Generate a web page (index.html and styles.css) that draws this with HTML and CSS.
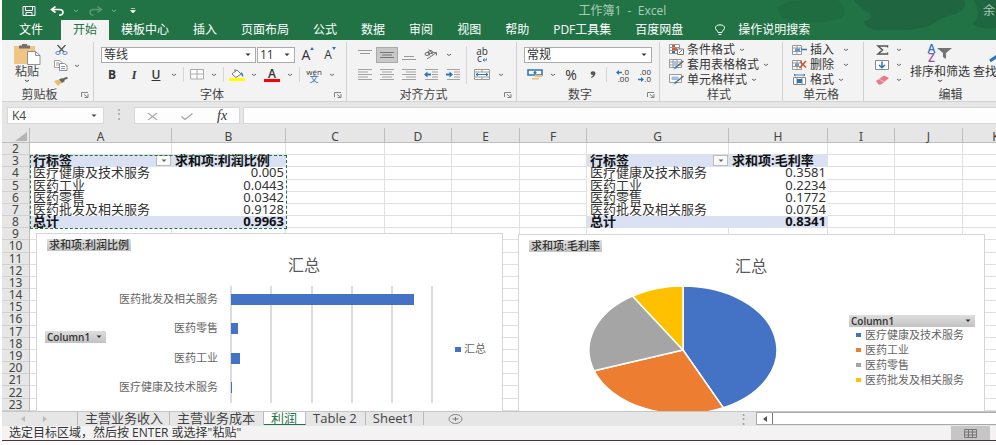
FILE: index.html
```html
<!DOCTYPE html>
<html lang="zh-CN">
<head>
  <meta charset="UTF-8">
  <title>工作簿1 - Excel</title>
  <link rel="stylesheet" href="styles.css">
</head>
<body>

  <svg class="defs" aria-hidden="true">
    <symbol id="chev" viewBox="0 0 6 4"><path d="M1 1l2 1.5L5 1" fill="none" stroke="currentColor"/></symbol>
    <symbol id="tri" viewBox="0 0 6 4"><path d="M0.5 0.5h5L3 3z" fill="currentColor"/></symbol>
    <symbol id="launch" viewBox="0 0 8 6"><path d="M0.5 5V0.5H7M3 2.5l3.500 2.500M7 2v3.500H3.500" fill="none" stroke="#777" stroke-width="0.9"/></symbol>
  </svg>

  <header class="top">
    <svg class="clouds" viewBox="0 0 240 40" preserveAspectRatio="none" aria-hidden="true">
      <path d="M22 8q6-8 30-8h30q10 8 5 17-18 8-40 4-26 0-25-13z" fill="#1f6c41"/>
      <path d="M98 0h110q4 8-8 14-14 3-22 9-14 9-50 7-16 2-20-8 12-5 4-10-10-6-14-12z" fill="#1e6540"/>
      <path d="M218 0h22v28q-12 2-24-4 10-8 2-24z" fill="#1e6540"/>
    </svg>
    <div class="titlebar">
      <div class="quick">
        <button class="q" aria-label="保存"><svg width="14" height="10" viewBox="0 0 14 10"><path d="M1 0.500h12v9H1zM3.500 0.500v4h7v-4M4 9.500v-3h6v3" fill="none" stroke="#fff"/></svg></button>
        <button class="q" aria-label="撤消"><svg width="15" height="10" viewBox="0 0 15 10"><path d="M2 3.500h7.500q3.500 0 3.500 2.800T9 9.200M5.500 0.500L1.500 3.500l4 3" fill="none" stroke="#fff" stroke-width="1.600"/></svg></button>
        <svg class="qc" width="6" height="4"><use href="#chev"/></svg>
        <button class="q" aria-label="恢复"><svg width="15" height="10" viewBox="0 0 15 10"><path d="M13 3.500H5.500Q2 3.500 2 6.300t3.500 2.900M9.500 0.500l4 3-4 3" fill="none" stroke="#5a9a76" stroke-width="1.400"/></svg></button>
        <svg class="qc" width="6" height="4"><use href="#chev"/></svg>
        <button class="q" aria-label="自定义"><svg width="6" height="6" viewBox="0 0 6 6"><path d="M1 0.500h4M0.500 2.500h5L3 5z" fill="#fff" stroke="#fff" stroke-width="0.600"/></svg></button>
      </div>
      <div class="title">工作簿1&nbsp; -&nbsp; Excel</div>
      <div class="user">余</div>
    </div>
    <nav class="tabs">
      <a href="#" class="file">文件</a>
      <a href="#" class="active">开始</a>
      <a href="#">模板中心</a>
      <a href="#">插入</a>
      <a href="#">页面布局</a>
      <a href="#">公式</a>
      <a href="#">数据</a>
      <a href="#">审阅</a>
      <a href="#">视图</a>
      <a href="#">帮助</a>
      <a href="#">PDF工具集</a>
      <a href="#">百度网盘</a>
      <a href="#" class="tell">
        <svg width="12" height="12" viewBox="0 0 12 12"><path d="M4 8.500Q3.800 7.300 2.500 6 1 4.500 1.500 3 2.500 0.800 6 0.800T10.500 3q0.500 1.500-1 3Q8.200 7.300 8 8.500zM4.500 10.500h3" fill="none" stroke="#fff"/></svg>
        操作说明搜索
      </a>
    </nav>
  </header>

  <section class="ribbon">
    <div class="group g-clip">
      <div class="body">
        <button class="paste">
          <svg width="28" height="21" viewBox="0 0 28 21"><path d="M1 2h21v18H1z" fill="#eec583"/><path d="M6 1.500h3V0h5v1.500h3v3H6z" fill="#77706a"/><path d="M14.500 7.500h8l4.500 4v9H14.500z" fill="#fff" stroke="#777" stroke-width="0.800"/><path d="M22.500 7.500v4H27" fill="none" stroke="#777" stroke-width="0.800"/></svg>
          <span>粘贴</span>
          <svg width="6" height="4"><use href="#chev"/></svg>
        </button>
        <div class="col">
          <button class="ic w18" aria-label="剪切"><svg width="13" height="10" viewBox="0 0 13 10"><path d="M2.500 0L9 7M10.500 0L4 7" stroke="#555" stroke-width="1.300"/><ellipse cx="3" cy="8" rx="2.200" ry="1.500" fill="none" stroke="#5b8cc4"/><ellipse cx="10" cy="8" rx="2.200" ry="1.500" fill="none" stroke="#5b8cc4"/></svg></button>
          <div class="row"><button class="ic w18" aria-label="复制"><svg width="14" height="11" viewBox="0 0 14 11"><path d="M0.500 0.500h5l2.500 2v5H0.500zM2 3h3M2 5h3" fill="#fff" stroke="#888" stroke-width="0.800"/><path d="M5.500 3.500h5l2.500 2v5H5.500z" fill="#fff" stroke="#777" stroke-width="0.800"/><path d="M7 6.500h4M7 8.500h4" stroke="#5b8cc4" stroke-width="0.800"/></svg></button><svg class="c" width="6" height="4"><use href="#chev"/></svg></div>
          <button class="ic w18" aria-label="格式刷"><svg width="14" height="9" viewBox="0 0 14 9"><path d="M0 4l5-1.500 3 3L4 9z" fill="#eeb96b"/><path d="M5 2.500L8 1l3 3-3 2z" fill="#666"/><path d="M9 2.500L13.500 0.500" stroke="#666" stroke-width="2"/></svg></button>
        </div>
      </div>
      <div class="label"><span>剪贴板</span><svg width="8" height="6"><use href="#launch"/></svg></div>
    </div>

    <div class="group g-font">
      <div class="body stack">
        <div class="row">
          <button class="combo font-name" aria-label="字体">等线<svg width="6" height="4"><use href="#tri"/></svg></button>
          <button class="combo font-size" aria-label="字号">11<svg width="6" height="4"><use href="#tri"/></svg></button>
          <button class="ic w22" aria-label="增大字号"><span class="big-a">A</span><svg class="up" width="4" height="3" viewBox="0 0 4 3"><path d="M0 3l2-3 2 3z" fill="#2e75b6"/></svg></button>
          <button class="ic w22" aria-label="减小字号"><span class="small-a">A</span><svg class="up" width="4" height="3" viewBox="0 0 4 3"><path d="M0 0h4L2 3z" fill="#2e75b6"/></svg></button>
        </div>
        <div class="row">
          <button class="ic w22 b">B</button>
          <button class="ic w22 i">I</button>
          <button class="ic w22 u">U</button>
          <svg class="c" width="6" height="4"><use href="#chev"/></svg>
          <i class="sep"></i>
          <button class="ic w20" aria-label="边框"><svg width="14" height="11" viewBox="0 0 14 11"><path d="M0.500 0.500h13v9.500H0.500zM7 0.500v9.500M0.500 5h13" fill="#fff" stroke="#aaa"/></svg></button>
          <svg class="c" width="6" height="4"><use href="#chev"/></svg>
          <i class="sep"></i>
          <button class="ic w20" aria-label="填充颜色"><svg width="16" height="12" viewBox="0 0 16 12"><path d="M3 5l5-4 4 4-5 3.500z" fill="#fff" stroke="#777"/><path d="M6 0v3" stroke="#777"/><path d="M12 3q3 2 2 5-2-1-2-5z" fill="#3a78b8"/><path d="M0 9h16v3H0z" fill="#ffff00"/></svg></button>
          <svg class="c" width="6" height="4"><use href="#chev"/></svg>
          <button class="ic w22" aria-label="字体颜色"><span class="color-a">A</span></button>
          <svg class="c" width="6" height="4"><use href="#chev"/></svg>
          <i class="sep"></i>
          <button class="ic w22 pinyin" aria-label="拼音"><span>wén</span><span class="zh">文</span></button>
          <svg class="c" width="6" height="4"><use href="#chev"/></svg>
        </div>
      </div>
      <div class="label"><span>字体</span><svg width="8" height="6"><use href="#launch"/></svg></div>
    </div>

    <div class="group g-align">
      <div class="body">
        <div class="stack">
          <div class="row">
            <button class="ic w22" aria-label="顶端对齐"><svg width="14" height="12" viewBox="0 0 14 12"><path d="M0 1.500h14M2 4.500h10" stroke="#999"/></svg></button>
            <button class="ic w22 on" aria-label="垂直居中"><svg width="14" height="12" viewBox="0 0 14 12"><path d="M0 3.500h14M2 6h10M0 8.500h14" stroke="#777"/></svg></button>
            <button class="ic w22" aria-label="底端对齐"><svg width="14" height="12" viewBox="0 0 14 12"><path d="M2 7.500h10M0 10.500h14" stroke="#999"/></svg></button>
            <button class="ic w22" aria-label="方向"><svg width="14" height="11" viewBox="0 0 14 11"><path d="M3 10l9-6M9 3.500h3.500v3" fill="none" stroke="#777"/><ellipse cx="3" cy="5" rx="2" ry="1.500" fill="none" stroke="#666"/><ellipse cx="6.500" cy="3" rx="2" ry="1.500" fill="none" stroke="#666"/><path d="M4 2.500l2 4M5 0.500l4 5" stroke="#666"/></svg></button>
            <svg class="c" width="6" height="4"><use href="#chev"/></svg>
          </div>
          <div class="row">
            <button class="ic w22" aria-label="左对齐"><svg width="14" height="11" viewBox="0 0 14 11"><path d="M0 0.500h14M0 3h10M0 5.500h14M0 8h10M0 10.500h14" stroke="#999" stroke-width="0.900"/></svg></button>
            <button class="ic w22" aria-label="居中"><svg width="14" height="11" viewBox="0 0 14 11"><path d="M0 0.500h14M2 3h10M0 5.500h14M2 8h10M0 10.500h14" stroke="#999" stroke-width="0.900"/></svg></button>
            <button class="ic w22" aria-label="右对齐"><svg width="14" height="11" viewBox="0 0 14 11"><path d="M0 0.500h14M4 3h10M0 5.500h14M4 8h10M0 10.500h14" stroke="#999" stroke-width="0.900"/></svg></button>
            <button class="ic w22" aria-label="减少缩进"><svg width="14" height="11" viewBox="0 0 14 11"><path d="M1 0.500h13M8 3h6M8 5.500h6M8 8h6M1 10.500h13" stroke="#999" stroke-width="0.900"/><path d="M0 5.500l3.500-3v2H7v2H3.500v2z" fill="#2e75b6"/></svg></button>
            <button class="ic w22" aria-label="增加缩进"><svg width="14" height="11" viewBox="0 0 14 11"><path d="M1 0.500h13M8 3h6M8 5.500h6M8 8h6M1 10.500h13" stroke="#999" stroke-width="0.900"/><path d="M7 5.500l-3.500-3v2H0v2h3.500v2z" fill="#2e75b6"/></svg></button>
          </div>
        </div>
        <i class="sep tall"></i>
        <div class="stack">
          <div class="row"><button class="ic w24 wrap" aria-label="自动换行"><span>ab</span><span>c<svg width="5" height="4" viewBox="0 0 5 4"><path d="M5 0v2H1M2.500 0.500L1 2l1.500 1.500" fill="none" stroke="#2e75b6"/></svg></span></button></div>
          <div class="row">
            <button class="ic w24" aria-label="合并后居中"><svg width="16" height="11" viewBox="0 0 16 11"><path d="M0.500 0.500h15v10H0.500zM0.500 3h15M0.500 8h15M8 0.500V3M8 8v2.500" fill="#fff" stroke="#999"/><path d="M2 5.500h12M4 4L2 5.500 4 7M12 4l2 1.500L12 7" fill="none" stroke="#2e75b6"/></svg></button>
            <svg class="c" width="6" height="4"><use href="#chev"/></svg>
          </div>
        </div>
      </div>
      <div class="label"><span>对齐方式</span><svg width="8" height="6"><use href="#launch"/></svg></div>
    </div>

    <div class="group g-num">
      <div class="body stack">
        <div class="row"><button class="combo num-format" aria-label="数字格式">常规<svg width="6" height="4"><use href="#tri"/></svg></button></div>
        <div class="row">
          <button class="ic w22" aria-label="会计数字格式"><svg width="16" height="11" viewBox="0 0 16 11"><path d="M1 1h14v5H1z" fill="#fff" stroke="#2e75b6" stroke-width="1.600"/><circle cx="8" cy="3.500" r="1.500" fill="#2e75b6"/><path d="M8 6h7v2H8zM5 9h7v1.500H5z" fill="#f0bd77"/></svg></button>
          <svg class="c" width="6" height="4"><use href="#chev"/></svg>
          <button class="ic w22 pct">%</button>
          <button class="ic w22" aria-label="千位分隔"><svg width="6" height="7" viewBox="0 0 6 7"><path d="M5.500 2Q5.500 5 1.500 7l-0.500-1q2-1 2-2Q0.500 4 0.500 2.200 0.500 0.300 3 0.300T5.500 2z" fill="#555"/></svg></button>
          <i class="sep"></i>
          <button class="ic w22 dec" aria-label="增加小数位数"><span><svg width="6" height="5" viewBox="0 0 6 5"><path d="M0 2.500L3 0v1.800h3v1.400H3V5z" fill="#2e75b6"/></svg>.0</span><span>.00</span></button>
          <button class="ic w22 dec" aria-label="减少小数位数"><span>.00</span><span><svg width="6" height="5" viewBox="0 0 6 5"><path d="M6 2.500L3 0v1.800H0v1.400h3V5z" fill="#2e75b6"/></svg>.0</span></button>
        </div>
      </div>
      <div class="label"><span>数字</span><svg width="8" height="6"><use href="#launch"/></svg></div>
    </div>

    <div class="group g-style">
      <div class="body list">
        <button class="line"><svg width="15" height="11" viewBox="0 0 15 11"><path d="M0.500 0.500h10v9H0.500zM0.500 3.500h10M0.500 6.500h10M5 0.500v9" fill="#fff" stroke="#999"/><path d="M3 1h3v2H3zM3 4h5v2H3z" fill="#e0582b"/><path d="M3 7h3v2H3z" fill="#2e75b6"/><path d="M8.500 5h6v5.500h-6zM10 9l3-3" fill="#fff" stroke="#777"/></svg>条件格式<svg class="c" width="6" height="4"><use href="#chev"/></svg></button>
        <button class="line"><svg width="15" height="11" viewBox="0 0 15 11"><path d="M0.500 0.500h12v8H0.500zM0.500 3h12M0.500 6h12M4 0.500v8M8 0.500v8" fill="#fff" stroke="#999"/><path d="M4 3h5v3H4z" fill="#9cc0e4"/><path d="M14.500 2l-6 5" stroke="#666" stroke-width="1.600"/><path d="M9.500 6Q8 10 4 10.500q2-1 2-3z" fill="#3a80c0"/></svg>套用表格格式<svg class="c" width="6" height="4"><use href="#chev"/></svg></button>
        <button class="line"><svg width="15" height="11" viewBox="0 0 15 11"><path d="M0.500 0.500h12v8H0.500z" fill="#fff" stroke="#999"/><path d="M2.500 2.500h7v3.500h-7z" fill="#9cc0e4"/><path d="M14.500 2l-6 5" stroke="#666" stroke-width="1.600"/><path d="M9.500 6Q8 10 4 10.500q2-1 2-3z" fill="#3a80c0"/></svg>单元格样式<svg class="c" width="6" height="4"><use href="#chev"/></svg></button>
      </div>
      <div class="label"><span>样式</span></div>
    </div>

    <div class="group g-cells">
      <div class="body list">
        <button class="line"><svg width="15" height="10" viewBox="0 0 15 10"><path d="M0.500 0.500h9v9h-9zM0.500 3h9M0.500 6.500h9M5 0.500v9" fill="#fff" stroke="#999"/><path d="M3 3.500h5v2.500H3z" fill="#5b9bd5"/><path d="M9 4.500h6" stroke="#2e75b6" stroke-width="1.500"/></svg>插入<svg class="c far" width="6" height="4"><use href="#chev"/></svg></button>
        <button class="line"><svg width="15" height="10" viewBox="0 0 15 10"><path d="M0.500 0.500h9v9h-9zM0.500 3h9M0.500 6.500h9M5 0.500v9" fill="#fff" stroke="#999"/><path d="M3 3.500h4v2.500H3z" fill="#5b9bd5"/><path d="M8 1.500l6 6M14 1L7.500 8" stroke="#d9532c" stroke-width="1.500"/></svg>删除<svg class="c far" width="6" height="4"><use href="#chev"/></svg></button>
        <button class="line"><svg width="15" height="11" viewBox="0 0 15 11"><path d="M1.500 3.500h12v7h-12zM5 3.500v7M10 3.500v7" fill="#fff" stroke="#888"/><path d="M5 5h5v4H5z" fill="#2e75b6"/><path d="M2 1h11M3.500 0L2 1l1.500 1M11.500 0L13 1l-1.500 1" fill="none" stroke="#2e75b6" stroke-width="0.900"/></svg>格式<svg class="c" width="6" height="4"><use href="#chev"/></svg></button>
      </div>
      <div class="label"><span>单元格</span></div>
    </div>

    <div class="group g-edit">
      <div class="body">
        <div class="list">
          <button class="line" aria-label="自动求和"><svg width="15" height="10" viewBox="0 0 15 10"><path d="M12.500 2.500V1H3l4.500 4L3 9h9.500V7.500" fill="none" stroke="#555" stroke-width="1.500"/></svg><svg class="c far" width="6" height="4"><use href="#chev"/></svg></button>
          <button class="line" aria-label="填充"><svg width="15" height="10" viewBox="0 0 15 10"><path d="M0.500 0.500h13v9h-13z" fill="#fff" stroke="#888"/><path d="M7 1.500v6M4 5l3 2.800L10 5" fill="none" stroke="#2e75b6" stroke-width="1.500"/></svg><svg class="c far" width="6" height="4"><use href="#chev"/></svg></button>
          <button class="line" aria-label="清除"><svg width="15" height="10" viewBox="0 0 15 10"><path d="M1 6l8-5.500L14 3 6 9.500H3.500z" fill="#e8798f"/><path d="M4 4l5 3" stroke="#f6c3cc"/></svg><svg class="c far" width="6" height="4"><use href="#chev"/></svg></button>
        </div>
        <button class="sort">
          <span class="sort-icon"><span class="az"><b>A</b><b class="z">Z</b></span><svg width="15" height="11" viewBox="0 0 15 11"><path d="M0 0h15L9 5v6L6 9V5z" fill="#737373"/></svg></span>
          <span>排序和筛选</span>
          <svg width="6" height="4"><use href="#chev"/></svg>
        </button>
        <button class="sort find">
          <span class="sort-icon"><svg width="28" height="18" viewBox="0 0 28 18"><circle cx="18" cy="4" r="5" fill="none" stroke="#2e75b6" stroke-width="1.500"/><path d="M14 8L1 17" stroke="#2e75b6" stroke-width="3"/></svg></span>
          <span>查找和选择</span>
        </button>
      </div>
      <div class="label"><span>编辑</span></div>
    </div>
  </section>

  <section class="formula">
    <button class="name" aria-label="名称框">K4<svg width="6" height="4"><use href="#tri"/></svg></button>
    <i class="dots">⋮</i>
    <div class="fx">
      <button aria-label="取消"><svg width="11" height="7" viewBox="0 0 11 7"><path d="M1 0l9 7M10 0L1 7" stroke="#aaa" stroke-width="1.200"/></svg></button>
      <button aria-label="输入"><svg width="12" height="7" viewBox="0 0 12 7"><path d="M0.500 3.500l3.500 3L11.500 0.500" fill="none" stroke="#aaa" stroke-width="1.400"/></svg></button>
      <button class="f">fx</button>
    </div>
    <input type="text" class="entry" aria-label="编辑栏">
  </section>

  <main class="sheet">
    <table class="cells">
      <colgroup>
        <col class="c28"><col class="c142"><col class="c114"><col class="c99"><col class="c67"><col class="c68"><col class="c67"><col class="c142"><col class="c99"><col class="c67"><col class="c68"><col class="c67">
      </colgroup>
      <thead>
        <tr><th class="corner"><svg width="12" height="9" viewBox="0 0 12 9"><path d="M12 0v9H0z" fill="#b5b5b5"/></svg></th><th>A</th><th>B</th><th>C</th><th>D</th><th>E</th><th>F</th><th>G</th><th>H</th><th>I</th><th>J</th><th>K</th></tr>
      </thead>
      <tbody id="rows"></tbody>
    </table>
    <div class="ants"></div>

    <div class="chart chart-bar">
      <svg width="466" height="190" viewBox="0 0 466 190">
        <path d="M194 52v117M234 52v117M275 52v117M315 52v117M355 52v117M395 52v117" stroke="#dcdcdc" stroke-width="2"/>
        <g fill="#4472c4">
          <rect x="194" y="60" width="183" height="11"/>
          <rect x="194" y="89" width="7" height="11"/>
          <rect x="194" y="119" width="9" height="11"/>
          <rect x="194" y="148" width="1" height="11"/>
          <rect x="418" y="113" width="6" height="5"/>
        </g>
        <text class="ctitle" x="267" y="37" text-anchor="middle">汇总</text>
        <g class="clabel" text-anchor="end">
          <text x="181" y="69">医药批发及相关服务</text>
          <text x="181" y="98">医药零售</text>
          <text x="181" y="128">医药工业</text>
          <text x="181" y="157">医疗健康及技术服务</text>
        </g>
        <text class="clabel" x="427" y="119">汇总</text>
        <g class="clabel" text-anchor="middle">
          <text x="194" y="185">0</text><text x="234" y="185">0.2</text><text x="275" y="185">0.4</text><text x="315" y="185">0.6</text><text x="355" y="185">0.8</text><text x="395" y="185">1</text>
        </g>
      </svg>
      <button class="field field-value">求和项:利润比例</button>
      <button class="field field-axis">Column1<svg width="6" height="4"><use href="#tri"/></svg></button>
    </div>

    <div class="chart chart-pie">
      <svg width="466" height="190" viewBox="0 0 466 190">
        <g stroke="#fff" stroke-width="1.500">
          <path d="M164 115V51A94 64 0 0 1 204.300 172.800z" fill="#4472c4"/>
          <path d="M164 115L204.300 172.800A94 64 0 0 1 75.100 135.800z" fill="#ed7d31"/>
          <path d="M164 115L75.100 135.800A94 64 0 0 1 113.500 61z" fill="#a5a5a5"/>
          <path d="M164 115L113.500 61A94 64 0 0 1 164 51z" fill="#ffc000"/>
        </g>
        <text class="ctitle" x="232" y="37" text-anchor="middle">汇总</text>
      </svg>
      <button class="field field-value">求和项:毛利率</button>
      <div class="legend">
        <button class="field">Column1<svg width="6" height="4"><use href="#tri"/></svg></button>
        <ul>
          <li class="s1">医疗健康及技术服务</li>
          <li class="s2">医药工业</li>
          <li class="s3">医药零售</li>
          <li class="s4">医药批发及相关服务</li>
        </ul>
      </div>
    </div>
  </main>

  <nav class="sheets">
    <button class="nav" aria-label="上一张"><svg width="4" height="6" viewBox="0 0 4 6"><path d="M4 0v6L0 3z" fill="#bbb"/></svg></button>
    <button class="nav" aria-label="下一张"><svg width="4" height="6" viewBox="0 0 4 6"><path d="M0 0v6l4-3z" fill="#bbb"/></svg></button>
    <a href="#" class="first">主营业务收入</a>
    <a href="#">主营业务成本</a>
    <a href="#" class="active">利润</a>
    <a href="#">Table 2</a>
    <a href="#">Sheet1</a>
    <button class="add" aria-label="新工作表"><svg width="15" height="10" viewBox="0 0 15 10"><ellipse cx="7.500" cy="5" rx="6.500" ry="4.500" fill="none" stroke="#888"/><path d="M4.500 5h6M7.500 3v4" stroke="#777"/></svg></button>
    <i class="dots">⋮</i>
    <div class="scroll"><button aria-label="向左滚动"><svg width="4" height="6" viewBox="0 0 4 6"><path d="M4 0v6L0 3z" fill="#555"/></svg></button></div>
  </nav>

  <footer class="status">
    <span>选定目标区域，然后按 ENTER 或选择"粘贴"</span>
    <button class="view" aria-label="普通视图"><svg width="13" height="9" viewBox="0 0 13 9"><path d="M0.500 0.500h12v8H0.500zM0.500 3h12M0.500 6h12M4.500 0.500v8M8.500 0.500v8" fill="none" stroke="#777"/></svg></button>
  </footer>

  <script>
    // two pivot tables: A:B and G:H
    const pivots = [
      { col: 1, head: ["行标签", "求和项:利润比例"], total: "0.9963", data: [
        ["医疗健康及技术服务", "0.005"], ["医药工业", "0.0443"],
        ["医药零售", "0.0342"], ["医药批发及相关服务", "0.9128"]
      ] },
      { col: 7, head: ["行标签", "求和项:毛利率"], total: "0.8341", data: [
        ["医疗健康及技术服务", "0.3581"], ["医药工业", "0.2234"],
        ["医药零售", "0.1772"], ["医药批发及相关服务", "0.0754"]
      ] }
    ];
    const filterBtn = '<button class="filter" aria-label="筛选"><svg width="6" height="4"><use href="#tri"/></svg></button>';

    const tbody = document.getElementById("rows");
    for (let r = 2; r <= 23; r++) {
      const tr = tbody.insertRow();
      tr.innerHTML = `<th>${r}</th>` + "<td></td>".repeat(11);
      pivots.forEach(p => {
        const a = tr.cells[p.col];
        const b = tr.cells[p.col + 1];
        if (r === 3) {
          a.innerHTML = `<div class="head">${p.head[0]}${filterBtn}</div>`;
          b.textContent = p.head[1];
          a.className = b.className = "hl";
        } else if (r >= 4 && r <= 7) {
          a.textContent = p.data[r - 4][0];
          b.textContent = p.data[r - 4][1];
          a.className = "plain";
          b.className = "plain num";
        } else if (r === 8) {
          a.textContent = "总计";
          b.textContent = p.total;
          a.className = "hl";
          b.className = "hl num";
        }
      });
    }
  </script>
</body>
</html>
```
FILE: styles.css
```css
* {
  box-sizing: border-box;
}

body {
  margin: 0;
  padding: 0 0 4px 2px;
  height: 100vh;
  display: flex;
  flex-direction: column;
  overflow: hidden;
  background: #fff;
  color: #333;
  font: 12px/14px "Open Sans", "Noto Sans CJK SC", sans-serif;
  white-space: nowrap;
}

button {
  margin: 0;
  padding: 0;
  border: 0;
  background: none;
  color: inherit;
  font: inherit;
  white-space: nowrap;
}

a {
  color: inherit;
  text-decoration: none;
}

svg {
  flex: none;
}

.defs {
  position: absolute;
  width: 0;
  height: 0;
}

/* title bar and tabs */
.top {
  position: relative;
  flex: none;
  background: #217346;
  color: #fff;
}

.clouds {
  position: absolute;
  right: 0;
  top: 0;
  width: 240px;
  height: 40px;
}

.titlebar {
  position: relative;
  display: grid;
  grid-template-columns: 58% 1fr auto;
  height: 20px;
  padding-top: 1px;
  align-items: center;
  color: #a9cdb9;
}

.quick {
  display: flex;
  align-items: center;
  padding-left: 15px;
}

.q {
  display: flex;
  justify-content: center;
  width: 24px;
}

.q + .q {
  margin-left: 4px;
}

.qc {
  margin: 0 4px;
  color: #7fb397;
}

.user {
  padding-right: 1px;
}

.tabs {
  position: relative;
  display: flex;
  height: 20px;
  line-height: 20px;
  padding-left: 5px;
}

.tabs a {
  padding: 0 12px;
}

.tabs .file {
  margin-right: 6px;
}

.tabs .active {
  background: #f3f3f3;
  color: #217346;
}

.tabs .tell {
  display: flex;
  align-items: center;
  gap: 12px;
  margin-left: 7px;
}

/* ribbon */
.ribbon {
  display: flex;
  flex: none;
  height: 62px;
  padding-top: 2px;
  background: #f3f3f3;
  border-bottom: 1px solid #d2d2d2;
}

.group {
  flex: none;
  display: flex;
  flex-direction: column;
  border-right: 1px solid #d0d0d0;
}

.g-clip { width: 92px; }
.g-font { width: 253px; }
.g-align { width: 170px; }
.g-num { width: 143px; }
.g-style { width: 123px; }
.g-cells { width: 81px; }
.g-edit { width: 178px; }

.body {
  display: flex;
  height: 47px;
  padding-left: 7px;
}

.label {
  display: flex;
  align-items: center;
  height: 12px;
  line-height: 12px;
  padding-right: 4px;
  color: #444;
}

.label span {
  flex: 1;
  text-align: center;
}

.label svg {
  margin-left: 4px;
}

.row {
  display: flex;
  align-items: center;
}

.stack {
  display: flex;
  flex-direction: column;
  padding-top: 4px;
  gap: 3px;
}

.stack .row {
  height: 17px;
}

.ic {
  display: flex;
  align-items: center;
  justify-content: center;
  height: 16px;
}

.w18 { width: 18px; }
.w20 { width: 20px; }
.w22 { width: 22px; }
.w24 { width: 24px; }

.c {
  margin: 0 4px;
  color: #666;
}

.sep {
  width: 1px;
  height: 15px;
  margin: 0 3px 0 2px;
  background: #d5d5d5;
}

.sep.tall {
  height: 38px;
  margin-top: 4px;
}

.on {
  background: #c8c8c8;
  border: 1px solid #aaa;
}

.paste {
  display: flex;
  flex-direction: column;
  align-items: center;
  width: 36px;
  padding-top: 2px;
  margin-right: 7px;
  color: #444;
}

.col {
  display: flex;
  flex-direction: column;
  justify-content: space-between;
}

.col .ic {
  height: 15px;
}

.combo {
  display: flex;
  align-items: center;
  justify-content: space-between;
  height: 16px;
  padding: 0 4px 0 2px;
  background: #fff;
  border: 1px solid #ababab;
}

.font-name { width: 155px; }
.font-size { width: 38px; margin: 0 2px 0 1px; }
.num-format { width: 128px; }

.big-a { font-size: 14px; }
.small-a { font-size: 12px; }

.up {
  align-self: flex-start;
}

.b { font-weight: bold; }

.i {
  font-family: "Liberation Serif", serif;
  font-style: italic;
  font-weight: bold;
}

.u {
  font-weight: 600;
  text-decoration: underline;
}

.color-a {
  width: 16px;
  height: 14px;
  line-height: 11px;
  font-weight: 600;
  border-bottom: 3px solid #f00;
}

.pinyin,
.wrap,
.dec {
  flex-direction: column;
  font-size: 8px;
  line-height: 7px;
}

.pinyin .zh {
  color: #2e75b6;
  font-size: 9px;
}

.wrap {
  font-size: 10px;
}

.pct {
  font-size: 14px;
}

.dec {
  align-items: flex-end;
  padding-right: 3px;
}

.list {
  display: flex;
  flex-direction: column;
}

.body.list {
  padding-left: 9px;
}

.line {
  display: flex;
  align-items: center;
  height: 15px;
}

.line > svg:first-child {
  margin-right: 3px;
}

.line .far {
  margin-left: 9px;
}

.g-edit .line .far {
  margin-left: 3px;
}

.g-edit .list {
  padding-left: 4px;
}

.sort {
  display: flex;
  flex-direction: column;
  align-items: center;
  justify-content: flex-start;
  width: 60px;
  margin-left: 4px;
}

.find {
  margin-left: 3px;
}

.sort-icon {
  display: flex;
  align-items: center;
  gap: 2px;
  height: 22px;
}

.az {
  display: flex;
  flex-direction: column;
  color: #2e75b6;
  line-height: 9px;
}

.az b {
  font-weight: 600;
}

.az .z {
  color: #9350b5;
}

.sort > span + span {
  line-height: 15px;
}

/* formula bar */
.formula {
  display: flex;
  flex: none;
  height: 26px;
  padding: 5px 0 4px 5px;
  background: #e6e6e6;
}

.name {
  display: flex;
  align-items: center;
  justify-content: space-between;
  width: 97px;
  padding: 0 6px 0 4px;
  background: #fdfdfd;
  border: 1px solid #d8d8d8;
  color: #444;
}

.dots {
  width: 30px;
  text-align: center;
  font-style: normal;
  color: #999;
}

.fx {
  display: flex;
  align-items: center;
  justify-content: space-around;
  width: 106px;
  margin-right: 3px;
  background: #fdfdfd;
  border: 1px solid #d8d8d8;
}

.f {
  font: italic 14px/14px "Liberation Serif", serif;
}

.entry {
  flex: 1;
  min-width: 0;
  border: 1px solid #d8d8d8;
  border-right: 0;
  background: #fdfdfd;
}

/* grid */
.sheet {
  position: relative;
  flex: 1;
  min-height: 0;
  overflow: hidden;
}

.cells {
  width: 1028px;
  height: 100%;
  table-layout: fixed;
  border-spacing: 0;
  font: 12px/11px "Noto Sans", "Noto Sans CJK SC", sans-serif;
}

.c28 { width: 28px; }
.c67 { width: 67px; }
.c68 { width: 68px; }
.c99 { width: 99px; }
.c114 { width: 114px; }
.c142 { width: 142px; }

.cells th {
  padding: 0;
  background: #e6e6e6;
  color: #444;
  font-weight: normal;
  border-right: 1px solid #bdbdbd;
  border-bottom: 1px solid #d0d0d0;
}

.cells thead th {
  height: 15px;
  padding-top: 3px;
  border-color: #bdbdbd;
}

.cells .corner {
  text-align: right;
  padding-right: 2px;
}

.corner svg {
  display: block;
  margin-left: auto;
}

.cells td {
  padding: 0 2px 0 3px;
  font-size: 13px;
  border-right: 1px solid #e0e0e0;
  border-bottom: 1px solid #e0e0e0;
}

.cells .num {
  padding-right: 1px;
  text-align: right;
}

.cells .plain {
  border-color: #fff;
}

.cells .hl {
  background: #d9e1f2;
  border-color: #d9e1f2;
  color: #111;
  font-weight: bold;
}

.head {
  display: flex;
  justify-content: space-between;
}

.filter {
  display: flex;
  align-items: center;
  justify-content: center;
  width: 15px;
  height: 11px;
  margin-right: -2px;
  background: #fafafa;
  border: 1px solid #bbb;
  color: #666;
}

.ants {
  position: absolute;
  left: 28px;
  top: 27px;
  width: 257px;
  height: 74px;
  border: 1px dashed #217346;
}

/* charts float over the grid */
.chart {
  position: absolute;
  width: 467px;
  height: 190px;
  background: #fff;
  border: 1px solid #d5d5d5;
}

.chart svg {
  display: block;
}

.chart-bar {
  left: 34px;
  top: 105px;
}

.chart-pie {
  left: 516px;
  top: 106px;
}

.ctitle {
  font-size: 16px;
  fill: #595959;
}

.clabel {
  font-size: 11px;
  fill: #666;
}

.field {
  display: flex;
  align-items: center;
  justify-content: space-between;
  height: 12px;
  padding: 0 4px 0 2px;
  background: linear-gradient(#dedede, #c2c2c2);
  font-size: 10px;
  line-height: 12px;
  font-weight: 600;
}

.field-value {
  position: absolute;
  left: 10px;
  top: 5px;
  padding-right: 2px;
  font-size: 11px;
  font-weight: 500;
}

.field-axis {
  position: absolute;
  left: 8px;
  top: 97px;
  width: 61px;
}

.legend {
  position: absolute;
  left: 330px;
  top: 80px;
  width: 126px;
}

.legend .field {
  width: 100%;
}

.legend ul {
  margin: 0;
  padding: 0 0 0 7px;
  list-style: none;
  font-size: 11px;
  line-height: 15px;
  color: #666;
}

.legend li {
  display: flex;
  align-items: center;
  gap: 4px;
}

.legend li::before {
  content: "";
  width: 5px;
  height: 4px;
  background: currentColor;
}

.s1::before { color: #4472c4; }
.s2::before { color: #ed7d31; }
.s3::before { color: #a5a5a5; }
.s4::before { color: #ffc000; }

/* sheet tabs */
.sheets {
  display: flex;
  flex: none;
  height: 15px;
  background: #e6e6e6;
  border-top: 1px solid #c6c6c6;
  font-size: 13px;
  line-height: 12px;
  color: #444;
}

.nav {
  display: flex;
  align-items: center;
  justify-content: center;
  width: 22px;
  margin-left: 10px;
}

.nav + .nav {
  margin-left: 0;
}

.sheets a {
  height: 13px;
  padding: 0 8px 0 7px;
  border-right: 1px solid #bbb;
}

.sheets .first {
  margin-left: 21px;
  padding-right: 6px;
  border-left: 1px solid #bbb;
}

.sheets .active {
  background: #fff;
  color: #217346;
  border-bottom: 1px solid #217346;
}

.add {
  display: flex;
  align-items: center;
  margin-left: 24px;
}

.sheets .dots {
  margin-left: auto;
  width: 25px;
}

.scroll {
  width: 25%;
  max-width: 240px;
  height: 13px;
  background: #fff;
  border: 1px solid #aaa;
  border-right: 0;
}

.scroll button {
  display: flex;
  align-items: center;
  justify-content: center;
  width: 16px;
  height: 100%;
  border-right: 1px solid #777;
}

/* status bar */
.status {
  display: flex;
  flex: none;
  justify-content: space-between;
  height: 15px;
  padding: 0 6px 0 7px;
  background: #f3f3f3;
  border-bottom: 1px solid #53303a;
}

.view {
  display: flex;
  align-items: center;
  justify-content: center;
  width: 39px;
  background: #c6c6c6;
}
```
